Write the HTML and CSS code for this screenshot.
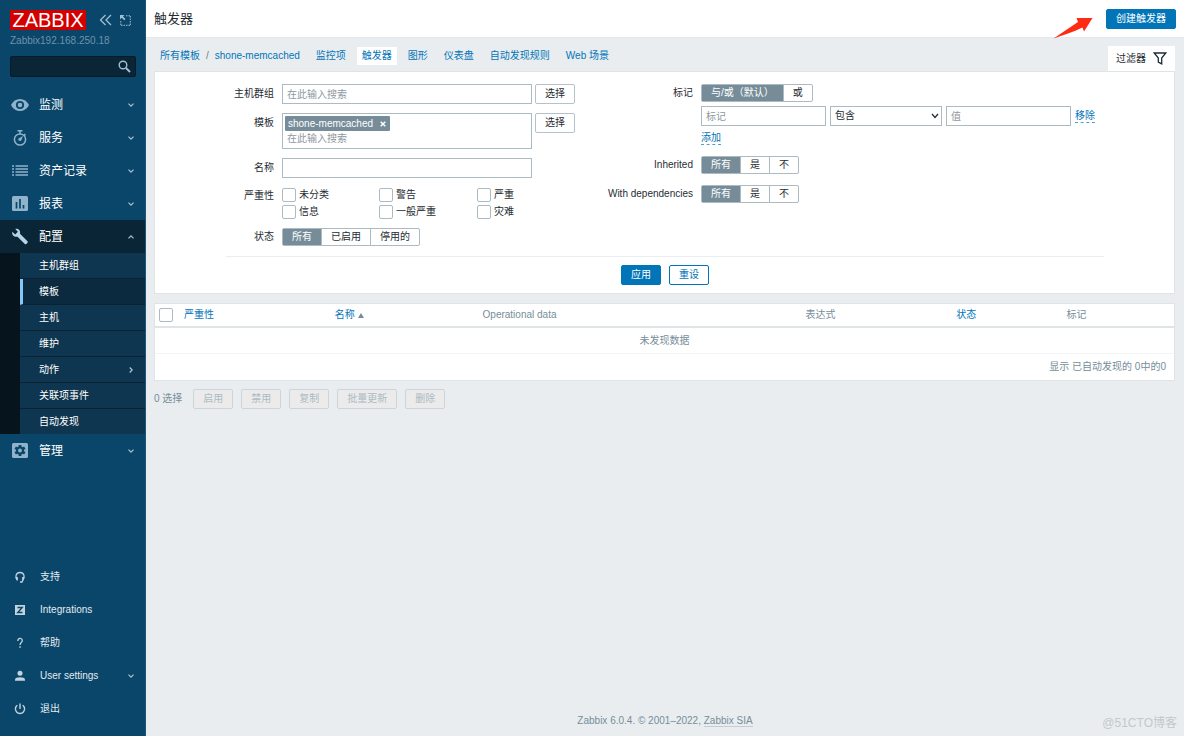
FILE: index.html
```html
<!DOCTYPE html>
<html lang="zh-CN">
<head>
<meta charset="utf-8">
<title>触发器</title>
<link rel="stylesheet" href="styles.css">
</head>
<body>
<svg class="defs" aria-hidden="true">
  <symbol id="down" viewBox="0 0 6 6"><path d="M.5 1.700l2.500 2.500 2.500-2.500" fill="none" stroke="currentColor" stroke-width="1.200"/></symbol>
</svg>
<aside class="sidebar">
  <div class="brand">
    <a class="logo" href="#">ZABBIX</a>
    <button class="icon-button" aria-label="收起"><svg width="14" height="12" viewBox="0 0 14 12"><path d="M6.5 1L1.5 6l5 5M12 1L7 6l5 5" fill="none" stroke="currentColor" stroke-width="1.3"/></svg></button>
    <button class="icon-button" aria-label="隐藏"><svg width="11" height="11" viewBox="0 0 11 11"><path d="M6 .8h4.5M10.3 1v9.5M10 10.3H.5M.8 10V5.5" fill="none" stroke="currentColor" stroke-dasharray="1.5 1"/><path d="M0 0h4.5L3 1.5l2.5 2.6-1.2 1.2L1.6 2.8 0 4.5z" fill="currentColor"/></svg></button>
  </div>
  <div class="server">Zabbix192.168.250.18</div>
  <form class="search">
    <input type="text" aria-label="搜索">
    <button type="button" class="icon-button" aria-label="搜索"><svg width="13" height="13" viewBox="0 0 13 13"><g fill="none" stroke="currentColor"><circle cx="5" cy="5" r="3.8" stroke-width="1.4"/><path d="M8 8l4 4" stroke-width="2"/></g></svg></button>
  </form>
  <nav class="menu">
    <a class="item" href="#"><svg class="glyph" viewBox="0 0 18 18"><path d="M0 9C2 5 5.300 3 9 3s7 2 9 6c-2 4-5.300 6-9 6S2 13 0 9z" fill="currentColor"/><circle cx="9" cy="9" r="3.200" fill="none" stroke="#0a466a" stroke-width="1.800"/></svg><span>监测</span><svg class="caret"><use href="#down"/></svg></a>
    <a class="item" href="#"><svg class="glyph" viewBox="0 0 18 18"><g fill="none" stroke="currentColor" stroke-width="1.500"><circle cx="9" cy="10.500" r="5.600"/><path d="M6.500 1.800h5M9 2v3M13 5l1.500 1.500"/></g><path d="M12 7l-2 5-2.500-.5-.3-1.800z" fill="currentColor"/></svg><span>服务</span><svg class="caret"><use href="#down"/></svg></a>
    <a class="item" href="#"><svg class="glyph" viewBox="0 0 18 18"><path d="M1 5h2M1 8h2M1 11h2M1 14h2M4.500 5H17M4.500 8H17M4.500 11H17M4.500 14H17" transform="translate(0 -1)" stroke="currentColor" stroke-width="1.400"/></svg><span>资产记录</span><svg class="caret"><use href="#down"/></svg></a>
    <a class="item" href="#"><svg class="glyph" viewBox="0 0 18 18"><rect x="1" y="1" width="16" height="15" rx="1.500" fill="currentColor"/><path d="M5.500 7v6.500M9 4v9.500M12.500 10v3.500" stroke="#0a466a" stroke-width="1.700"/></svg><span>报表</span><svg class="caret"><use href="#down"/></svg></a>
    <a class="item open" href="#"><svg class="glyph" viewBox="0 0 18 18"><path d="M4.300 1C7 .3 9.800 2.400 9 5.800l7.500 7.400c.5.500.5 1 0 1.500l-1.200 1.200c-.5.500-1 .5-1.500 0L6.500 8.700C3.500 9.500.5 7 1.300 3.700l2.900 2.700 2.700-2.600z" fill="currentColor"/></svg><span>配置</span><svg class="caret up"><use href="#down"/></svg></a>
    <div class="submenu">
      <a href="#">主机群组</a>
      <a class="current" href="#">模板</a>
      <a href="#">主机</a>
      <a href="#">维护</a>
      <a href="#">动作<svg class="caret right"><use href="#down"/></svg></a>
      <a href="#">关联项事件</a>
      <a href="#">自动发现</a>
    </div>
    <a class="item" href="#"><svg class="glyph" viewBox="0 0 18 18"><rect x="1" y="1" width="16" height="15" rx="1.500" fill="currentColor"/><path d="M9 3v11M4.200 5.800l9.600 5.400M4.200 11.200l9.600-5.400" stroke="#0a466a" stroke-width="2.800"/><circle cx="9" cy="8.500" r="4" fill="#0a466a"/><circle cx="9" cy="8.500" r="1.900" fill="currentColor"/></svg><span>管理</span><svg class="caret"><use href="#down"/></svg></a>
  </nav>
  <nav class="menu user">
    <a class="item" href="#"><svg class="glyph" viewBox="0 0 18 18"><path d="M6.300 12C3.500 9 5 4.500 9 4.500s5.500 4.500 2.700 7.500M9 14h2l1-2" fill="none" stroke="currentColor" stroke-width="1.300"/><path d="M4.800 9h2v3.500h-1zM11.200 9h2l-1 3.500h-1z" fill="currentColor"/></svg><span>支持</span></a>
    <a class="item" href="#"><svg class="glyph" viewBox="0 0 18 18"><rect x="4" y="4" width="10" height="10" fill="currentColor"/><path d="M6.500 6.500h4.700l-4.400 5h4.700" fill="none" stroke="#0a466a" stroke-width="1.400"/></svg><span>Integrations</span></a>
    <a class="item" href="#"><svg class="glyph" viewBox="0 0 18 18"><path d="M6.800 7C6.800 3.600 11.300 3.600 11.300 6.500 11.300 8.500 9 8.500 9 11" fill="none" stroke="currentColor" stroke-width="1.300"/><path d="M8.300 12.300h1.500v1.500H8.300z" fill="currentColor"/></svg><span>帮助</span></a>
    <a class="item" href="#"><svg class="glyph" viewBox="0 0 18 18"><circle cx="9" cy="6.300" r="2.500" fill="currentColor"/><path d="M4 13.800v-1.300c0-3 10-3 10 0v1.300z" fill="currentColor"/></svg><span>User settings</span><svg class="caret"><use href="#down"/></svg></a>
    <a class="item" href="#"><svg class="glyph" viewBox="0 0 18 18"><path d="M6.300 5.200a4.600 4.600 0 1 0 5.400 0M9 3.500V9" fill="none" stroke="currentColor" stroke-width="1.400"/></svg><span>退出</span></a>
  </nav>
</aside>
<div class="page">
  <header class="header">
    <h1>触发器</h1>
    <svg class="pointer" width="40" height="22" viewBox="0 0 40 22" aria-hidden="true"><path d="M.5 21.500L25 5l-1.500-4L39.500 1 31 14.500l-1.500-4C20 15 10 18 .5 21.500z" fill="#ff2a12"/></svg>
    <button class="button primary">创建触发器</button>
  </header>
  <div class="bar">
    <nav class="tabs">
      <a href="#">所有模板</a><span class="slash">/</span><a class="template" href="#">shone-memcached</a>
      <a href="#">监控项</a><a class="selected" href="#">触发器</a><a href="#">图形</a><a href="#">仪表盘</a><a href="#">自动发现规则</a><a href="#">Web 场景</a>
    </nav>
    <button class="filter-tab">过滤器<svg width="14" height="13" viewBox="0 0 14 13"><path d="M1.200 1h11.600L8.700 6v5.800L5.300 10V6z" fill="none" stroke="currentColor" stroke-width="1.300"/></svg></button>
  </div>
  <main>
    <form class="panel filter">
      <div class="columns">
        <div class="column">
          <label class="name" for="groups">主机群组</label>
          <div class="line"><input class="wide" id="groups" type="text" placeholder="在此输入搜索"><button type="button" class="button">选择</button></div>
          <label class="name" for="templates">模板</label>
          <div class="line"><div class="wide multi"><span class="chip">shone-memcached<button type="button" aria-label="移除"><svg width="6" height="6" viewBox="0 0 6 6"><path d="M.7.7l4.600 4.600M5.300.7L.7 5.300" stroke="currentColor" stroke-width="1.500"/></svg></button></span><input id="templates" type="text" placeholder="在此输入搜索"></div><button type="button" class="button">选择</button></div>
          <label class="name" for="name">名称</label>
          <div class="line"><input class="wide" id="name" type="text"></div>
          <span class="name short">严重性</span>
          <div class="checks">
            <label><input type="checkbox">未分类</label><label><input type="checkbox">警告</label><label><input type="checkbox">严重</label>
            <label><input type="checkbox">信息</label><label><input type="checkbox">一般严重</label><label><input type="checkbox">灾难</label>
          </div>
          <span class="name short">状态</span>
          <div class="line"><div class="segments"><label><input type="radio" name="state" checked>所有</label><label><input type="radio" name="state">已启用</label><label><input type="radio" name="state">停用的</label></div></div>
        </div>
        <div class="column second">
          <span class="name short">标记</span>
          <div class="tags">
            <div class="segments"><label><input type="radio" name="evaltype" checked>与/或（默认）</label><label><input type="radio" name="evaltype">或</label></div>
            <div class="line tag-row"><input type="text" placeholder="标记" aria-label="标记"><span class="select"><select aria-label="运算符"><option>包含</option></select><svg width="8" height="6" viewBox="0 0 8 6" aria-hidden="true"><path d="M1 1l3 3.500L7 1" fill="none" stroke="currentColor" stroke-width="1.200"/></svg></span><input type="text" placeholder="值" aria-label="值"><button type="button" class="link">移除</button></div>
            <div class="line add"><button type="button" class="link">添加</button></div>
          </div>
          <span class="name short">Inherited</span>
          <div class="line"><div class="segments"><label><input type="radio" name="inherited" checked>所有</label><label><input type="radio" name="inherited">是</label><label><input type="radio" name="inherited">不</label></div></div>
          <span class="name short">With dependencies</span>
          <div class="line"><div class="segments"><label><input type="radio" name="deps" checked>所有</label><label><input type="radio" name="deps">是</label><label><input type="radio" name="deps">不</label></div></div>
        </div>
      </div>
      <div class="buttons"><button type="button" class="button primary">应用</button><button type="button" class="button outline">重设</button></div>
    </form>
    <table class="panel list">
      <thead><tr>
        <th class="c-check"><input type="checkbox" aria-label="全选"></th>
        <th class="c-severity"><a href="#">严重性</a></th>
        <th class="c-name"><a href="#">名称 <i class="sort"></i></a></th>
        <th class="c-data">Operational data</th>
        <th class="c-expression">表达式</th>
        <th class="c-status"><a href="#">状态</a></th>
        <th>标记</th>
      </tr></thead>
      <tbody>
        <tr><td class="empty" colspan="7">未发现数据</td></tr>
        <tr><td class="total" colspan="7">显示 已自动发现的 0中的0</td></tr>
      </tbody>
    </table>
    <div class="actions"><span>0 选择</span><button class="button" disabled>启用</button><button class="button" disabled>禁用</button><button class="button" disabled>复制</button><button class="button" disabled>批量更新</button><button class="button" disabled>删除</button></div>
  </main>
  <footer>Zabbix 6.0.4. © 2001–2022, <a href="#">Zabbix SIA</a><span class="watermark">@51CTO博客</span></footer>
</div>
</body>
</html>
```
FILE: styles.css
```css
* { box-sizing: border-box; }
body {
  margin: 0;
  min-height: 100vh;
  display: flex;
  background: #e9edf0;
  color: #1f2c33;
  font: 10px/14px "Liberation Sans", "Noto Sans CJK SC", sans-serif;
}
a { color: #0275b8; text-decoration: none; }
button, input, select { font: inherit; color: inherit; margin: 0; }
button { cursor: pointer; white-space: nowrap; }
.defs { display: none; }

.sidebar {
  flex: 0 0 146px;
  min-width: 0;
  display: flex;
  flex-direction: column;
  background: #0a466a;
  border-right: 1px solid #1f5577;
  color: #fff;
}
.brand { display: flex; align-items: center; gap: 9px; padding: 10px 0 0 10px; }
.logo {
  width: 76px;
  margin-right: 4px;
  background: #d40000;
  color: #fff;
  font-size: 20px;
  line-height: 20px;
  text-align: center;
}
.icon-button { display: flex; padding: 0; border: 0; background: none; color: #9fbfd3; }
.brand .icon-button + .icon-button { margin-left: -2px; }
.server { padding: 4px 0 0 10px; color: #6d93ab; }
.search {
  display: flex;
  align-items: center;
  height: 21px;
  margin: 8px 9px 11px 10px;
  padding: 0 4px;
  background: #0a2536;
  border: 1px solid #061b28;
  border-radius: 2px;
}
.search input { flex: 1; width: 0; min-width: 0; outline: 0; }
.item {
  display: flex;
  align-items: center;
  height: 33px;
  padding: 0 11px;
  gap: 10px;
  color: #fff;
  font-size: 12px;
}
.item span { flex: 1; }
.glyph { width: 18px; height: 18px; color: #8fb3ca; }
.caret { width: 6px; height: 6px; color: #a9c3d2; }
.up { transform: rotate(180deg); }
.right { transform: rotate(-90deg); }
.open { background: #0a2535; }
.open .glyph { color: #b4d3e6; }
.submenu { border-left: 20px solid #06141d; }
.submenu a {
  display: flex;
  align-items: center;
  justify-content: space-between;
  height: 26px;
  padding: 0 11px 0 19px;
  background: #0f3650;
  border-bottom: 1px solid #0a2232;
  color: #fff;
}
.submenu a:last-child { height: 25px; border-bottom: 0; }
.submenu .current { padding-left: 16px; border-left: 3px solid #87c7f5; background: #0b2a3f; }
.user { margin-top: auto; padding-bottom: 11px; }
.user .item { font-size: 10px; color: #e3ebf0; gap: 11px; }
.user .glyph { color: #c3d3dd; }

.page { flex: 1; min-width: 0; display: flex; flex-direction: column; }
.header {
  position: relative;
  display: flex;
  align-items: center;
  justify-content: space-between;
  height: 38px;
  padding: 0 8px;
  background: #fff;
  border-bottom: 1px solid #e3e8eb;
}
h1 { margin: 0; font-size: 13px; font-weight: 400; line-height: 18px; }
.pointer { position: absolute; right: 91px; top: 17px; }
.button {
  height: 20px;
  padding: 0 9px;
  border: 1px solid #b4c3cb;
  border-radius: 2px;
  background: #fff;
  line-height: 16px;
}
.primary { background: #0275b8; border-color: #0275b8; color: #fff; }
.outline { border-color: #0275b8; color: #0275b8; }
.bar { display: flex; align-items: flex-end; justify-content: space-between; height: 33px; padding: 0 9px 0 8px; }
.tabs { display: flex; align-items: center; padding-bottom: 6px; }
.tabs a { padding: 2px 5px; margin-right: 6px; }
.tabs > :first-child { padding: 2px 6px; margin: 0; }
.tabs .slash { color: #6b7c87; }
.tabs .template { padding-left: 6px; }
.tabs .selected { background: #fff; }
.filter-tab {
  display: flex;
  align-items: center;
  gap: 7px;
  height: 25px;
  padding: 0 8px;
  border: 0;
  background: #fff;
}
main { padding: 0 9px 0 8px; }
.panel { background: #fff; border: 1px solid #dfe4e7; }

.filter { padding: 12px 70px 8px 71px; }
.columns { display: flex; padding-bottom: 10px; border-bottom: 1px solid #ebeef0; }
.column {
  flex: 0 0 373px;
  display: grid;
  grid-template-columns: 48px auto;
  column-gap: 8px;
  row-gap: 9px;
  align-content: start;
}
.second { flex: 1; grid-template-columns: 94px auto; row-gap: 11px; }
.name { line-height: 20px; text-align: right; }
.short { line-height: 18px; }
.line { display: flex; align-items: flex-start; gap: 3px; }
.wide { width: 250px; }
input[type="text"], select { height: 20px; border: 1px solid #acbbc2; border-radius: 0; background: #fff; padding: 0 4px; }
.select { position: relative; display: flex; width: 112px; }
.select select { width: 100%; appearance: none; }
.select svg { position: absolute; right: 3px; top: 7px; pointer-events: none; }
::placeholder { color: #8e989e; opacity: 1; }
.search input[type="text"] { border: 0; background: none; }
.multi { display: flex; flex-direction: column; align-items: flex-start; height: 36px; padding: 2px; border: 1px solid #acbbc2; }
.multi input[type="text"] { width: 100%; height: 16px; border: 0; padding: 0 2px; }
.chip { display: flex; align-items: center; padding: 0 4px 0 3px; background: #768d99; color: #fff; line-height: 15px; border-radius: 1px; }
.chip button { display: flex; padding: 0; margin-left: 7px; border: 0; background: none; }
.checks { display: grid; grid-template-columns: 97px 98px auto; row-gap: 3px; padding-top: 1px; }
.checks label { display: flex; align-items: center; gap: 3px; }
input[type="checkbox"] {
  appearance: none;
  width: 14px;
  height: 14px;
  border: 1px solid #acbbc2;
  border-radius: 2px;
  background: #fff;
}
.segments { display: inline-flex; height: 18px; border: 1px solid #acbbc2; border-radius: 2px; }
.segments label { display: flex; align-items: center; padding: 0 9px; line-height: 16px; }
.segments label + label { border-left: 1px solid #acbbc2; }
.segments input { appearance: none; width: 0; height: 0; }
.segments label:has(:checked) { background: #768d99; color: #fff; }
.tags { display: flex; flex-direction: column; align-items: flex-start; gap: 4px; }
.tag-row { gap: 4px; align-items: center; }
.tag-row input { width: 125px; }
.link { padding: 0; border: 0; border-bottom: 1px dashed #4f9fcd; background: none; color: #0275b8; line-height: 13px; }
.add { padding-top: 1px; }
.buttons { display: flex; justify-content: center; gap: 8px; padding-top: 8px; }

.list { width: 100%; margin-top: 9px; border-collapse: separate; border-spacing: 0; table-layout: fixed; color: #768d99; }
th, td { padding: 0 5px; font-weight: 400; text-align: left; }
th { height: 24px; border-bottom: 2px solid #dfe4e7; }
th input { display: block; }
td { height: 26px; }
.c-check { width: 24px; padding: 0 4px; }
.c-severity { width: 14.8%; }
.c-name { width: 14.5%; }
.c-data { width: 31.7%; }
.c-expression { width: 14.8%; }
.c-status { width: 10.8%; }
.sort { display: inline-block; border: 3px solid transparent; border-top: 0; border-bottom: 5px solid #768d99; }
.empty { text-align: center; border-bottom: 1px solid #f2f4f5; }
.total { text-align: right; padding-right: 8px; }
.actions { display: flex; align-items: center; gap: 8px; padding-top: 8px; color: #768d99; }
.actions span { margin-right: 3px; }
.actions .button { background: #ebebeb; border-color: #ccd5d9; color: #acbbc2; }
footer { position: relative; margin-top: auto; padding-bottom: 8px; text-align: center; color: #768d99; }
footer a { color: inherit; border-bottom: 1px solid #c3cdd2; }
.watermark { position: absolute; right: 7px; bottom: 6px; color: #c3c8cb; font-size: 12px; }
```
